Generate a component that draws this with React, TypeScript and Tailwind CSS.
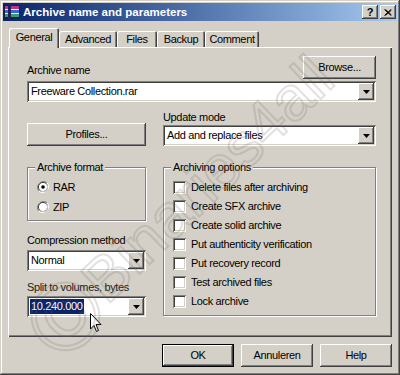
const raised =
  "shadow-[inset_-1px_-1px_#404040,inset_1px_1px_#ffffff,inset_-2px_-2px_#808080,inset_2px_2px_#d4d0c8]";
const sunken =
  "shadow-[inset_1px_1px_#808080,inset_-1px_-1px_#ffffff,inset_2px_2px_#404040,inset_-2px_-2px_#d4d0c8]";
const etched = "border border-[#808080] shadow-[inset_1px_1px_#ffffff,1px_1px_#ffffff]";

const Arrow = () => (
  <svg width="7" height="4" viewBox="0 0 7 4">
    <polygon points="0,0 7,0 3.5,4" fill="#000" />
  </svg>
);

const Combo = ({
  value,
  className = "",
  selected = false,
}: {
  value: string;
  className?: string;
  selected?: boolean;
}) => (
  <div className={`flex h-[21px] bg-white p-[2px] ${sunken} ${className}`}>
    <div className="flex flex-1 items-center overflow-hidden pl-[1px]">
      {selected ? (
        <span className="h-[15px] bg-[#0a246a] px-[1px] leading-[15px] text-white">{value}</span>
      ) : (
        <span className="pl-[1px]">{value}</span>
      )}
    </div>
    <div className={`flex w-[16px] items-center justify-center bg-[#d4d0c8] ${raised}`}>
      <Arrow />
    </div>
  </div>
);

const Button = ({ label, className = "" }: { label: string; className?: string }) => (
  <div className={`flex h-[23px] items-center justify-center bg-[#d4d0c8] ${raised} ${className}`}>
    {label}
  </div>
);

const Check = ({ label }: { label: string }) => (
  <div className="flex h-[19px] items-center gap-[5px]">
    <div className={`h-[13px] w-[13px] bg-white ${sunken}`} />
    <span>{label}</span>
  </div>
);

const Radio = ({ label, checked = false }: { label: string; checked?: boolean }) => (
  <div className="flex h-[20px] items-center gap-[4px]">
    <svg width="12" height="12" viewBox="0 0 12 12">
      <path d="M10.2 1.8 A6 6 0 0 0 1.8 10.2" stroke="#808080" fill="none" />
      <path d="M1.8 10.2 A6 6 0 0 0 10.2 1.8" stroke="#ffffff" fill="none" />
      <circle cx="6" cy="6" r="4.6" fill="#fff" stroke="#404040" />
      <path d="M2.7 9.3 A4.6 4.6 0 0 0 9.3 2.7" stroke="#d4d0c8" fill="none" />
      {checked && <circle cx="6" cy="6" r="1.8" fill="#000" />}
    </svg>
    <span>{label}</span>
  </div>
);

const Group = ({
  title,
  className = "",
  children,
}: {
  title: string;
  className?: string;
  children: React.ReactNode;
}) => (
  <div className={`relative ${etched} ${className}`}>
    <span className="absolute -top-[7px] left-[7px] bg-[#d4d0c8] px-[2px] leading-[13px]">{title}</span>
    {children}
  </div>
);

const tabs = [
  { name: "General", w: "w-[50px]" },
  { name: "Advanced", w: "w-[58px]" },
  { name: "Files", w: "w-[40px]" },
  { name: "Backup", w: "w-[48px]" },
  { name: "Comment", w: "w-[54px]" },
];

export default function App() {
  return (
    <div className="relative flex h-[375px] w-[400px] flex-col overflow-hidden bg-[#d4d0c8] p-[3px] font-['Liberation_Sans',Arial,sans-serif] text-[11px] leading-[13px] tracking-[-0.35px] text-black shadow-[inset_-1px_-1px_#404040,inset_1px_1px_#d4d0c8,inset_-2px_-2px_#808080,inset_2px_2px_#ffffff]">
      {/* title bar */}
      <div className="flex h-[18px] items-center bg-linear-to-r from-[#0a246a] to-[#a6caf0] pl-[1px] pr-[1px]">
        <svg width="16" height="16" viewBox="0 0 16 16">
          <rect x="0" y="1" width="16" height="14" fill="#1a1a50" />
          <rect x="1" y="2" width="14" height="3" fill="#c0308a" />
          <rect x="1" y="5" width="14" height="1" fill="#f0f0ff" />
          <rect x="1" y="6" width="14" height="3" fill="#3068d8" />
          <rect x="1" y="9" width="14" height="1" fill="#e0f0e0" />
          <rect x="1" y="10" width="14" height="3" fill="#30a070" />
          <rect x="4" y="1" width="3" height="14" fill="#20205a" />
        </svg>
        <span className="ml-[3px] text-[11.5px] font-bold tracking-normal text-white">Archive name and parameters</span>
        <div className="ml-auto flex gap-[2px]">
          <div className={`flex h-[14px] w-[16px] items-center justify-center bg-[#d4d0c8] text-[11px] font-bold ${raised}`}>
            ?
          </div>
          <div className={`flex h-[14px] w-[16px] items-center justify-center bg-[#d4d0c8] ${raised}`}>
            <svg width="8" height="7" viewBox="0 0 8 7">
              <path d="M0.5 0.5 L7 6.5 M1.5 0.5 L7.5 6 M7 0.5 L0.5 6.5 M7.5 1 L1.5 6.5" stroke="#000" strokeWidth="1" />
            </svg>
          </div>
        </div>
      </div>

      <div className="flex flex-1 flex-col px-[5px] pt-[7px]">
        {/* tabs */}
        <div className="flex h-[19px] items-end pl-[1px]">
          {tabs.map((t, i) => (
            <div
              key={t.name}
              className={`flex items-center justify-center rounded-t-[2px] bg-[#d4d0c8] shadow-[inset_1px_1px_#ffffff,inset_-1px_0_#404040,inset_-2px_0_#808080] ${t.w} ${
                i === 0 ? "relative z-10 -mb-px h-[20px] pb-[2px]" : "h-[16px]"
              }`}
            >
              {t.name}
            </div>
          ))}
        </div>

        {/* panel */}
        <div className="flex h-[290px] flex-col pl-[19px] pr-[16px] pt-[9px] shadow-[inset_1px_1px_#ffffff,inset_-1px_-1px_#404040,inset_-2px_-2px_#808080]">
          <div className="flex items-end justify-between">
            <span className="mb-[2px]">Archive name</span>
            <Button label="Browse..." className="w-[73px]" />
          </div>
          <Combo value="Freeware Collection.rar" className="mt-[2px]" />

          <div className="mt-[9px] flex items-end gap-[17px]">
            <Button label="Profiles..." className="w-[119px]" />
            <div className="flex flex-1 flex-col gap-[1px]">
              <span>Update mode</span>
              <Combo value="Add and replace files" />
            </div>
          </div>

          <div className="mt-[21px] flex gap-[17px]">
            <div className="flex w-[119px] flex-col">
              <Group title="Archive format" className="h-[54px] pl-[9px] pt-[9px]">
                <Radio label="RAR" checked />
                <Radio label="ZIP" />
              </Group>
              <span className="mt-[13px]">Compression method</span>
              <Combo value="Normal" className="mt-[3px]" />
              <span className="mt-[10px] text-[#202020]">Split to volumes, bytes</span>
              <Combo value="10.240.000" selected className="mt-[2px]" />
            </div>
            <Group title="Archiving options" className="h-[149px] flex-1 pl-[9px] pt-[10px]">
              <Check label="Delete files after archiving" />
              <Check label="Create SFX archive" />
              <Check label="Create solid archive" />
              <Check label="Put authenticity verification" />
              <Check label="Put recovery record" />
              <Check label="Test archived files" />
              <Check label="Lock archive" />
            </Group>
          </div>
        </div>

        {/* buttons */}
        <div className="mt-[7px] flex justify-end gap-[7px]">
          <Button label="OK" className="w-[72px] border border-black" />
          <Button label="Annuleren" className="w-[72px]" />
          <Button label="Help" className="w-[72px]" />
        </div>
      </div>

      {/* mouse pointer */}
      <svg className="absolute left-[90px] top-[313px]" width="12" height="20" viewBox="0 0 12 20">
        <path d="M0.5 0.5 L0.5 16 L4 12.5 L6.5 18.5 L8.5 17.5 L6 11.5 L11 11.5 Z" fill="#fff" stroke="#000" />
      </svg>

      {/* watermark */}
      <div className="pointer-events-none absolute left-[40px] top-[341px] flex origin-[0_50%] -translate-y-1/2 -rotate-[44deg] items-center whitespace-nowrap leading-none tracking-normal text-transparent [-webkit-text-stroke:2px_rgba(110,105,95,0.2)]">
        <span className="text-[96px]">©</span>
        <span className="ml-[2px] text-[62px]">Binaries4all</span>
      </div>
    </div>
  );
}
